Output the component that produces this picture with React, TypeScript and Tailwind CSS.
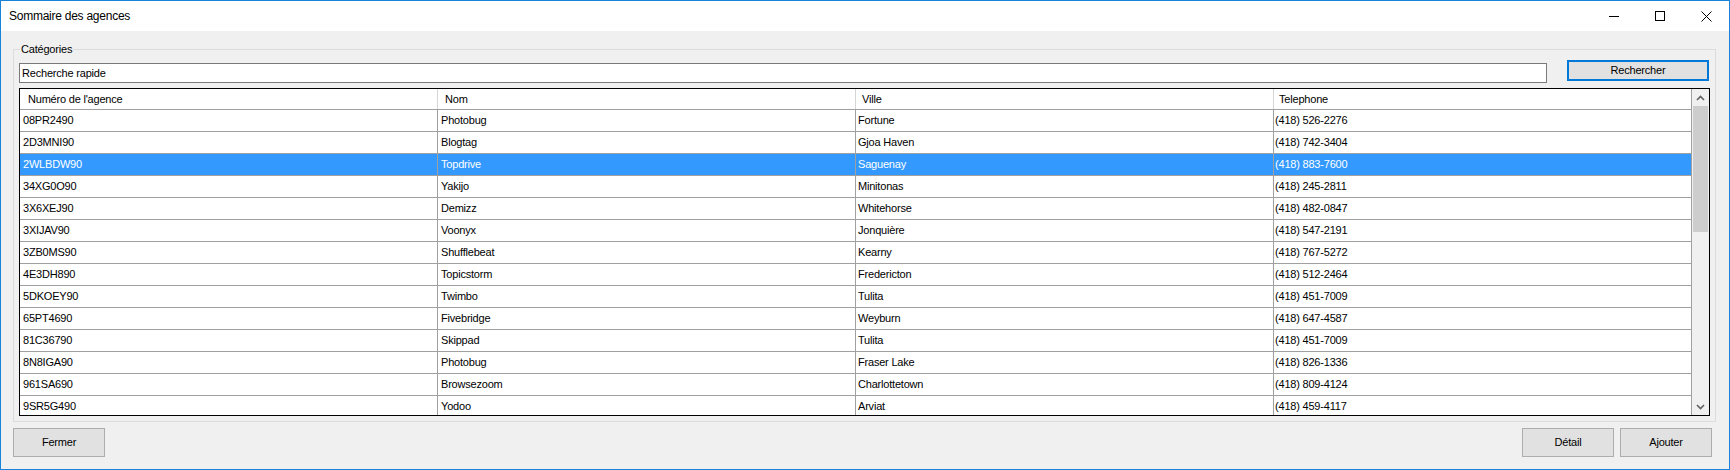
import React from "react";

type Agence = { num: string; nom: string; ville: string; tel: string };

const agences: Agence[] = [
  { num: "08PR2490", nom: "Photobug", ville: "Fortune", tel: "(418) 526-2276" },
  { num: "2D3MNI90", nom: "Blogtag", ville: "Gjoa Haven", tel: "(418) 742-3404" },
  { num: "2WLBDW90", nom: "Topdrive", ville: "Saguenay", tel: "(418) 883-7600" },
  { num: "34XG0O90", nom: "Yakijo", ville: "Minitonas", tel: "(418) 245-2811" },
  { num: "3X6XEJ90", nom: "Demizz", ville: "Whitehorse", tel: "(418) 482-0847" },
  { num: "3XIJAV90", nom: "Voonyx", ville: "Jonquière", tel: "(418) 547-2191" },
  { num: "3ZB0MS90", nom: "Shufflebeat", ville: "Kearny", tel: "(418) 767-5272" },
  { num: "4E3DH890", nom: "Topicstorm", ville: "Fredericton", tel: "(418) 512-2464" },
  { num: "5DKOEY90", nom: "Twimbo", ville: "Tulita", tel: "(418) 451-7009" },
  { num: "65PT4690", nom: "Fivebridge", ville: "Weyburn", tel: "(418) 647-4587" },
  { num: "81C36790", nom: "Skippad", ville: "Tulita", tel: "(418) 451-7009" },
  { num: "8N8IGA90", nom: "Photobug", ville: "Fraser Lake", tel: "(418) 826-1336" },
  { num: "961SA690", nom: "Browsezoom", ville: "Charlottetown", tel: "(418) 809-4124" },
  { num: "9SR5G490", nom: "Yodoo", ville: "Arviat", tel: "(418) 459-4117" },
];

const SELECTED = 2;

function Chevron({ up }: { up?: boolean }) {
  return (
    <svg width="9" height="6" viewBox="0 0 9 6">
      <polyline
        points={up ? "1,5 4.5,1.5 8,5" : "1,1 4.5,4.5 8,1"}
        fill="none"
        stroke="#606060"
        strokeWidth="1.6"
      />
    </svg>
  );
}

function WinButton({ label, className = "" }: { label: string; className?: string }) {
  return (
    <button
      className={`h-[29px] w-[92px] border border-[#adadad] bg-[#e1e1e1] text-black ${className}`}
    >
      {label}
    </button>
  );
}

export default function App() {
  return (
    <div className="flex h-[470px] w-[1730px] flex-col border border-[#1883d7] bg-[#f0f0f0] font-['Liberation_Sans',Arial,sans-serif] text-[11px] tracking-[-0.2px] text-black">
      {/* title bar */}
      <div className="flex h-[30px] shrink-0 items-center bg-white">
        <div className="flex-1 pl-[8px] text-[12px] tracking-[-0.25px]">
          Sommaire des agences
        </div>
        <div className="flex h-full w-[46px] items-center justify-center">
          <div className="h-px w-[10px] bg-black" />
        </div>
        <div className="flex h-full w-[46px] items-center justify-center">
          <div className="h-[10px] w-[10px] border border-black" />
        </div>
        <div className="flex h-full w-[46px] items-center justify-center">
          <svg width="11" height="11" viewBox="0 0 11 11">
            <path d="M0.5 0.5 L10.5 10.5 M10.5 0.5 L0.5 10.5" stroke="#000" strokeWidth="1" />
          </svg>
        </div>
      </div>

      {/* group box */}
      <fieldset className="ml-[12px] mr-[13px] mt-[11px] border border-[#dcdcdc] px-[5px] pb-[5px]">
        <legend className="ml-[1px] px-[1px] leading-[14px]">Catégories</legend>

        <div className="flex items-start">
          <div className="mt-[7px] flex h-[20px] flex-1 items-center border border-[#7a7a7a] bg-white pl-[2px]">
            Recherche rapide
          </div>
          <button className="ml-[20px] mr-[1px] mt-[4px] h-[21px] w-[142px] border-2 border-[#0078d7] bg-[#e1e1e1]">
            Rechercher
          </button>
        </div>

        {/* grid */}
        <div className="mt-[5px] flex h-[328px] border border-black bg-white">
          <div className="flex-1 overflow-hidden">
            <div className="flex h-[21px] border-b border-[#a0a0a0]">
              <div className="flex w-[418px] items-center border-r border-[#d5d5d5] pl-[8px]">
                Numéro de l'agence
              </div>
              <div className="flex w-[418px] items-center border-r border-[#d5d5d5] pl-[7px]">
                Nom
              </div>
              <div className="flex w-[418px] items-center border-r border-[#d5d5d5] pl-[6px]">
                Ville
              </div>
              <div className="flex w-[418px] items-center border-r border-[#a0a0a0] pl-[5px]">
                Telephone
              </div>
            </div>
            {agences.map((a, i) => {
              const sel = i === SELECTED;
              return (
                <div
                  key={a.num}
                  className={`flex h-[22px] border-b border-[#a0a0a0] ${sel ? "bg-[#3399ff] text-white" : ""}`}
                >
                  <div className="flex w-[418px] items-center border-r border-[#a0a0a0] pl-[3px]">
                    {a.num}
                  </div>
                  <div className="flex w-[418px] items-center border-r border-[#a0a0a0] pl-[3px]">
                    {a.nom}
                  </div>
                  <div className="flex w-[418px] items-center border-r border-[#a0a0a0] pl-[2px]">
                    {a.ville}
                  </div>
                  <div className="flex w-[418px] items-center border-r border-[#a0a0a0] pl-[1px]">
                    {a.tel}
                  </div>
                </div>
              );
            })}
          </div>

          {/* scrollbar */}
          <div className="flex w-[17px] shrink-0 flex-col bg-[#f0f0f0]">
            <div className="flex h-[17px] items-center justify-center">
              <Chevron up />
            </div>
            <div className="mx-[1px] h-[126px] bg-[#cdcdcd]" />
            <div className="flex-1" />
            <div className="flex h-[17px] items-center justify-center">
              <Chevron />
            </div>
          </div>
        </div>
      </fieldset>

      {/* bottom buttons */}
      <div className="ml-[12px] mr-[17px] mt-[6px] flex">
        <WinButton label="Fermer" />
        <div className="flex-1" />
        <WinButton label="Détail" />
        <WinButton label="Ajouter" className="ml-[6px]" />
      </div>
    </div>
  );
}
